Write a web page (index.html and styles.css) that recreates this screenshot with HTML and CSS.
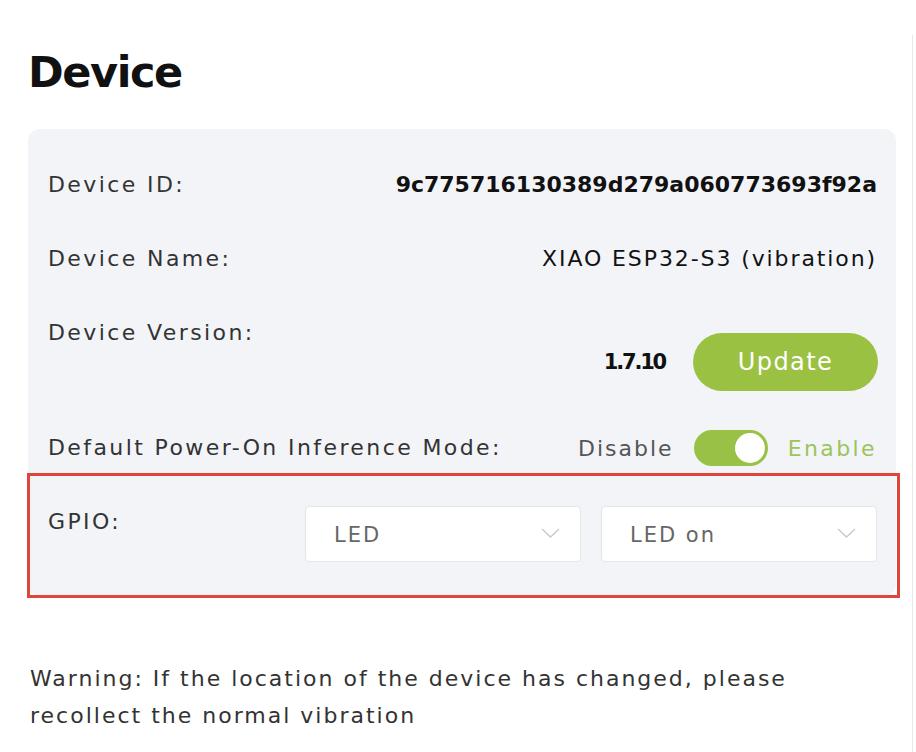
FILE: index.html
```html
<!DOCTYPE html>
<html lang="en">
<head>
<meta charset="utf-8">
<title>Device</title>
<link rel="stylesheet" href="styles.css">
</head>
<body>
<div class="panel">
  <h1 class="title">Device</h1>
  <section class="card">
    <div class="row">
      <span class="label">Device ID:</span>
      <span class="value value-id">9c775716130389d279a060773693f92a</span>
    </div>
    <div class="row">
      <span class="label">Device Name:</span>
      <span class="value">XIAO ESP32-S3 (vibration)</span>
    </div>
    <div class="row row-version">
      <span class="label">Device Version:</span>
      <div class="version-box">
        <span class="value value-version">1.7.10</span>
        <button class="btn-update" type="button">Update</button>
      </div>
    </div>
    <div class="row row-mode">
      <span class="label">Default Power-On Inference Mode:</span>
      <div class="switch-box">
        <span class="switch-off">Disable</span>
        <span class="switch"><span class="knob"></span></span>
        <span class="switch-on">Enable</span>
      </div>
    </div>
    <div class="row row-gpio">
      <span class="label label-gpio">GPIO:</span>
      <div class="selects">
        <div class="select">
          <span class="select-text">LED</span>
          <svg class="chevron" width="19" height="10" viewBox="0 0 19 10"><path d="M1 1 L9.5 9 L18 1" fill="none" stroke="#c8c9cd" stroke-width="1.4"/></svg>
        </div>
        <div class="select">
          <span class="select-text">LED on</span>
          <svg class="chevron" width="19" height="10" viewBox="0 0 19 10"><path d="M1 1 L9.5 9 L18 1" fill="none" stroke="#c8c9cd" stroke-width="1.4"/></svg>
        </div>
      </div>
      <div class="highlight"></div>
    </div>
  </section>
  <p class="warning">Warning: If the location of the device has changed, please recollect the normal vibration</p>
</div>
</body>
</html>
```

FILE: styles.css
```css
html, body {
  margin: 0;
  padding: 0;
  background: #ffffff;
}

body {
  font-family: "DejaVu Sans", Inter, sans-serif;
  color: #333333;
}

.panel {
  box-sizing: border-box;
  width: 913px;
  min-height: 717px;
  margin-top: 35px;
  padding: 0 16px 0 28px;
  border-right: 1px solid #e9e9eb;
}

.title {
  margin: 0;
  padding-top: 9px;
  height: 85px;
  font-size: 43px;
  line-height: 56px;
  font-weight: 700;
  color: #111111;
  letter-spacing: -1.4px;
}

.card {
  background: #f3f4f8;
  border-radius: 12px;
  padding: 19px 19px 34px 20px;
}

.row {
  display: flex;
  align-items: center;
  justify-content: space-between;
  height: 74px;
}

.label {
  font-size: 22px;
  line-height: 32px;
  letter-spacing: 2.4px;
  color: #333333;
}

.value {
  font-size: 22px;
  line-height: 32px;
  letter-spacing: 1.9px;
  color: #111111;
}

.value-id {
  font-weight: 700;
  letter-spacing: 0;
  font-size: 22px;
}

.value-version {
  font-weight: 700;
  font-size: 21px;
  letter-spacing: -2.2px;
}

.row-version {
  align-items: flex-start;
  height: auto;
}

.row-version .label {
  line-height: 74px;
}

.version-box {
  display: flex;
  align-items: center;
  gap: 28px;
  margin-top: 37px;
}

.btn-update {
  width: 185px;
  height: 58px;
  border: none;
  border-radius: 29px;
  background: #9bc143;
  color: #ffffff;
  font-family: inherit;
  font-size: 24px;
  letter-spacing: 1.4px;
  font-weight: 400;
  padding: 0;
  margin-right: -1px;
}

.row-mode {
  height: 36px;
  margin-top: 39px;
}

.switch-box {
  display: flex;
  align-items: center;
}

.switch-off {
  font-size: 22px;
  letter-spacing: 2px;
  color: #555555;
  margin-right: 20px;
}

.switch {
  display: flex;
  align-items: center;
  justify-content: flex-end;
  box-sizing: border-box;
  width: 74px;
  height: 36px;
  border-radius: 18px;
  background: #98c146;
  padding: 3px;
}

.knob {
  width: 30px;
  height: 30px;
  border-radius: 50%;
  background: #ffffff;
}

.switch-on {
  font-size: 22px;
  letter-spacing: 2.4px;
  color: #9dc35b;
  margin-left: 20px;
}

.row-gpio {
  position: relative;
  align-items: flex-start;
  height: 56px;
  margin-top: 40px;
}

.selects {
  display: flex;
  gap: 20px;
}

.select {
  box-sizing: border-box;
  width: 276px;
  height: 56px;
  background: #ffffff;
  border: 1px solid #e3e5ea;
  border-radius: 4px;
  display: flex;
  align-items: center;
  justify-content: space-between;
  padding: 0 20px 0 28px;
}

.select-text {
  font-size: 21px;
  letter-spacing: 2px;
  color: #666666;
  padding-top: 2px;
}

.chevron {
  display: block;
  margin-top: -2px;
}

.highlight {
  position: absolute;
  left: -21px;
  right: -23px;
  top: -33px;
  bottom: -36px;
  border: 3px solid #e0453c;
  pointer-events: none;
}

.warning {
  margin: 64px 0 0 2px;
  max-width: 840px;
  font-size: 22px;
  line-height: 37px;
  letter-spacing: 2px;
  color: #333333;
}
```
